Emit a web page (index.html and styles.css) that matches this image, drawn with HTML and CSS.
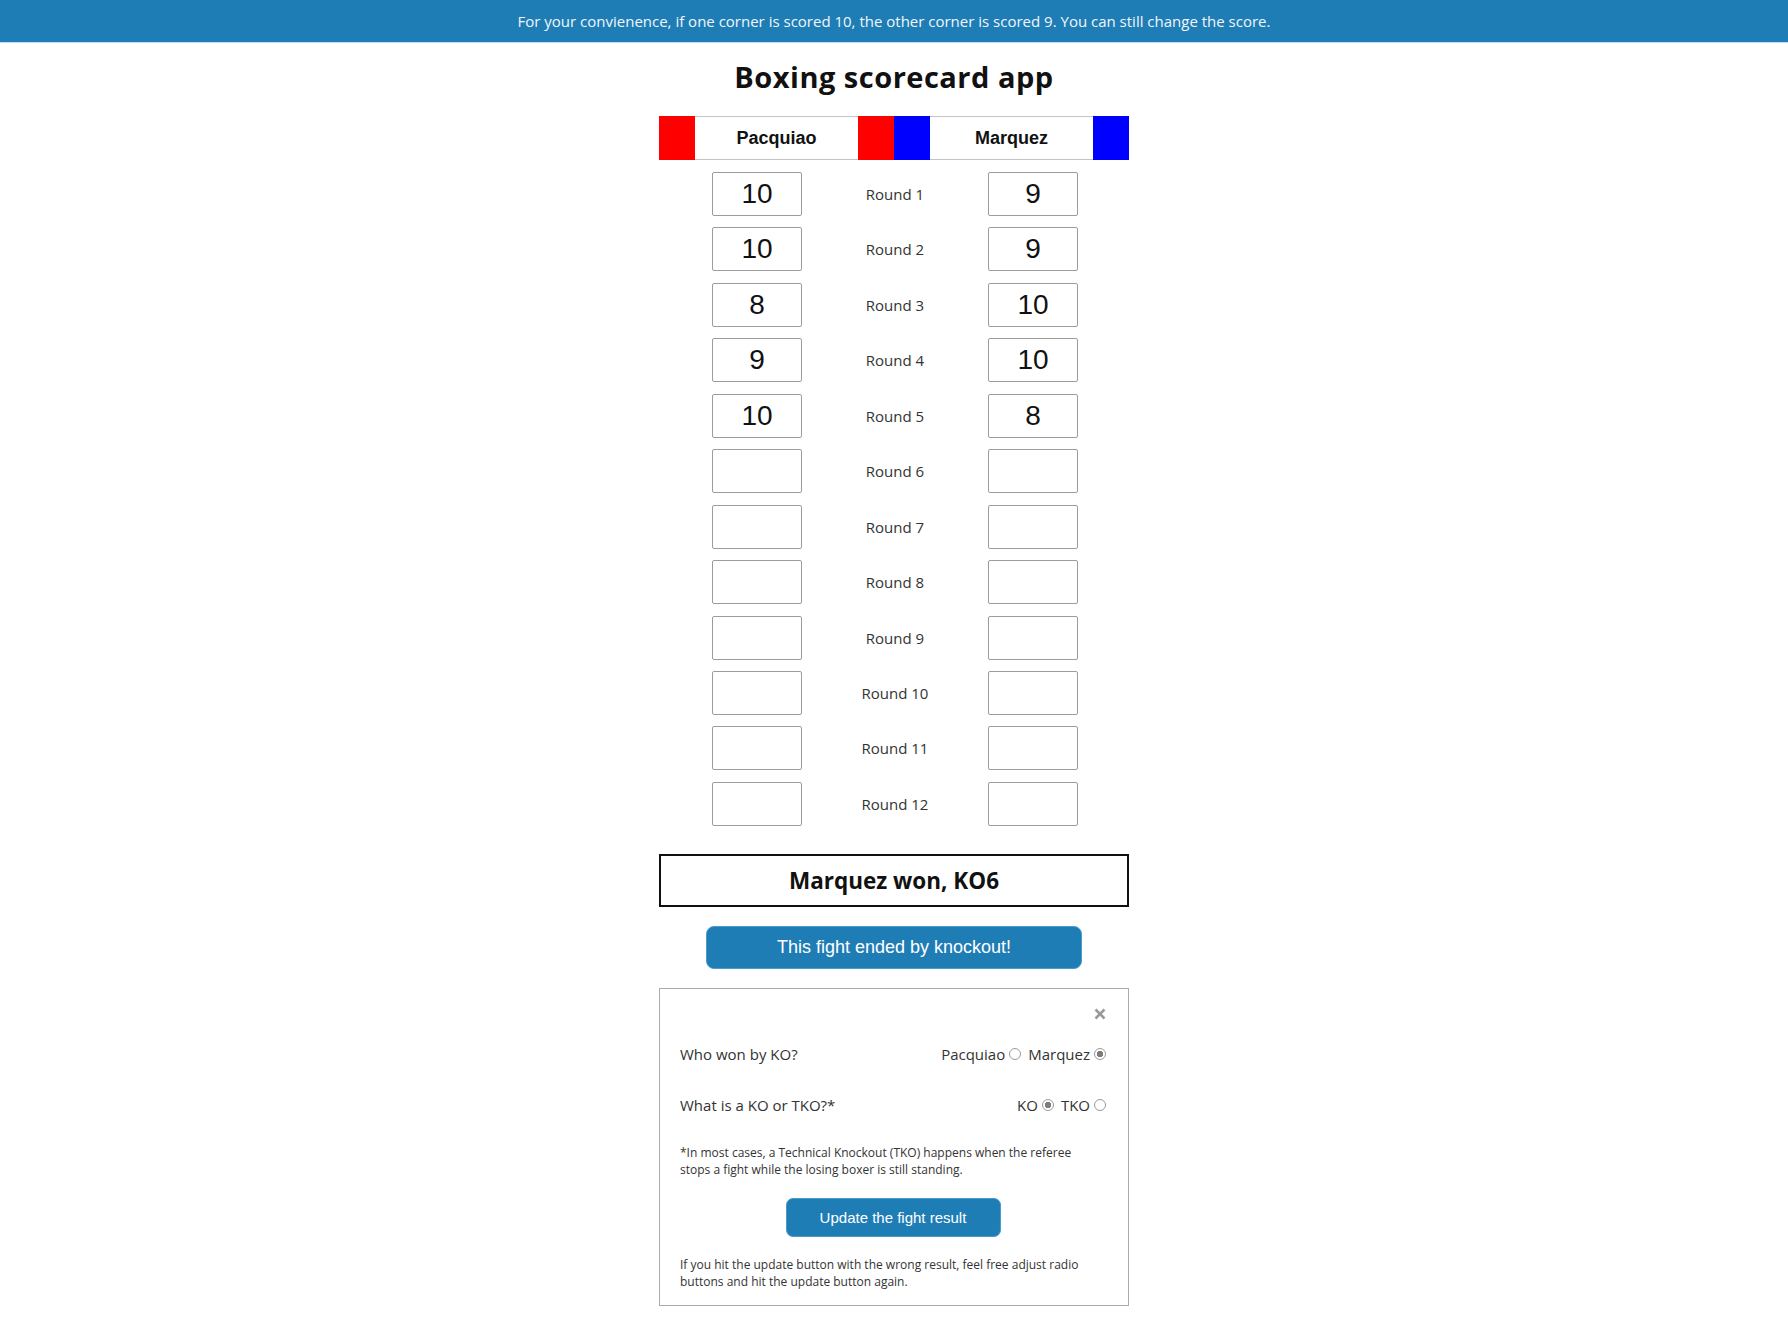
FILE: index.html
```html
<!DOCTYPE html>
<html lang="en">
<head>
<meta charset="utf-8">
<title>Boxing scorecard app</title>
<link rel="stylesheet" href="styles.css">
</head>
<body>
<div class="banner">For your convienence, if one corner is scored 10, the other corner is scored 9. You can still change the score.</div>
<main class="app">
  <h1 class="title">Boxing scorecard app</h1>
  <div class="fighters">
    <span class="corner red"></span>
    <span class="name">Pacquiao</span>
    <span class="corner red"></span>
    <span class="corner blue"></span>
    <span class="name">Marquez</span>
    <span class="corner blue"></span>
  </div>
  <div class="rounds">
    <div class="round"><input class="score" value="10"><span class="round-label">Round 1</span><input class="score" value="9"></div>
    <div class="round"><input class="score" value="10"><span class="round-label">Round 2</span><input class="score" value="9"></div>
    <div class="round"><input class="score" value="8"><span class="round-label">Round 3</span><input class="score" value="10"></div>
    <div class="round"><input class="score" value="9"><span class="round-label">Round 4</span><input class="score" value="10"></div>
    <div class="round"><input class="score" value="10"><span class="round-label">Round 5</span><input class="score" value="8"></div>
    <div class="round"><input class="score" value=""><span class="round-label">Round 6</span><input class="score" value=""></div>
    <div class="round"><input class="score" value=""><span class="round-label">Round 7</span><input class="score" value=""></div>
    <div class="round"><input class="score" value=""><span class="round-label">Round 8</span><input class="score" value=""></div>
    <div class="round"><input class="score" value=""><span class="round-label">Round 9</span><input class="score" value=""></div>
    <div class="round"><input class="score" value=""><span class="round-label">Round 10</span><input class="score" value=""></div>
    <div class="round"><input class="score" value=""><span class="round-label">Round 11</span><input class="score" value=""></div>
    <div class="round"><input class="score" value=""><span class="round-label">Round 12</span><input class="score" value=""></div>
  </div>
  <div class="result">Marquez won, KO6</div>
  <button class="btn btn-ko" type="button">This fight ended by knockout!</button>
  <section class="ko-panel">
    <div class="close-row">
      <svg class="close" width="12" height="12" viewBox="0 0 12 12" aria-label="close"><path d="M1.5 1.5 L10.5 10.5 M10.5 1.5 L1.5 10.5" stroke="#9a9a9a" stroke-width="2.6" stroke-linecap="butt"/></svg>
    </div>
    <div class="question">
      <span class="q-text">Who won by KO?</span>
      <span class="options">
        <label class="opt">Pacquiao <input type="radio" name="winner" class="radio"></label>
        <label class="opt">Marquez <input type="radio" name="winner" class="radio" checked></label>
      </span>
    </div>
    <div class="question q2">
      <span class="q-text">What is a KO or TKO?*</span>
      <span class="options">
        <label class="opt">KO <input type="radio" name="kind" class="radio" checked></label>
        <label class="opt">TKO <input type="radio" name="kind" class="radio"></label>
      </span>
    </div>
    <p class="note">*In most cases, a Technical Knockout (TKO) happens when the referee stops a fight while the losing boxer is still standing.</p>
    <button class="btn btn-update" type="button">Update the fight result</button>
    <p class="note note-last">If you hit the update button with the wrong result, feel free adjust radio buttons and hit the update button again.</p>
  </section>
</main>
</body>
</html>
```
FILE: styles.css
```css
* { box-sizing: border-box; }

body {
  margin: 0;
  background: #fff;
  font-family: "Open Sans", "Liberation Sans", sans-serif;
  color: #333;
}

.banner {
  height: 43px;
  background: #1f7db6;
  border-bottom: 1px solid #b9def5;
  color: #f2f6fa;
  font-size: 15px;
  display: flex;
  align-items: center;
  justify-content: center;
}

.app {
  width: 470px;
  margin: 0 auto;
  padding-bottom: 18px;
}

.title {
  margin: 16px 0 21px;
  font-size: 29px;
  letter-spacing: 0.5px;
  line-height: 36px;
  font-weight: 700;
  color: #111;
  text-align: center;
}

.fighters {
  display: flex;
  height: 44px;
}

.corner {
  width: 36px;
  flex: none;
}
.corner.red { background: #ff0000; }
.corner.blue { background: #0000ff; }

.name {
  flex: 1;
  display: flex;
  align-items: center;
  justify-content: center;
  border-top: 1px solid #c4c4c4;
  border-bottom: 1px solid #c4c4c4;
  font-family: "Liberation Sans", Arial, sans-serif;
  font-weight: 700;
  font-size: 18px;
  color: #111;
}

.rounds {
  margin-top: 12px;
  display: grid;
  row-gap: 11.45px;
}

.round {
  display: grid;
  grid-template-columns: 90px 1fr 90px;
  align-items: center;
  padding: 0 51px 0 53px;
  height: 44px;
}

.score {
  width: 90px;
  height: 44px;
  border: 1px solid #9c9c9c;
  border-radius: 2px;
  background: #fff;
  font-family: "Liberation Sans", Arial, sans-serif;
  font-size: 28px;
  color: #111;
  text-align: center;
  padding: 0;
  outline: none;
}

.round-label {
  text-align: center;
  font-size: 15px;
  color: #333;
}

.result {
  margin-top: 28px;
  height: 53px;
  border: 2px solid #111;
  display: flex;
  align-items: center;
  justify-content: center;
  font-size: 22.5px;
  font-weight: 700;
  color: #111;
}

.btn {
  display: block;
  margin: 0 auto;
  background: #1f7db6;
  border: 1px solid #4b9bcc;
  color: #fff;
  font-family: "Liberation Sans", Arial, sans-serif;
  cursor: pointer;
}

.btn-ko {
  margin-top: 19px;
  width: 376px;
  height: 43px;
  border-radius: 8px;
  font-size: 18px;
}

.ko-panel {
  margin-top: 19px;
  border: 1px solid #ababab;
  padding: 14px 22px 15px 20px;
}

.close-row {
  height: 22px;
  display: flex;
  justify-content: flex-end;
  align-items: center;
}

.question {
  margin-top: 17px;
  height: 24px;
  display: flex;
  align-items: center;
  justify-content: space-between;
  font-size: 15px;
  color: #333;
}

.question.q2 { margin-top: 27px; }

.options {
  display: flex;
  align-items: center;
  gap: 7px;
}

.opt {
  display: flex;
  align-items: center;
  gap: 4px;
}

.radio {
  appearance: none;
  -webkit-appearance: none;
  margin: 0;
  width: 12px;
  height: 12px;
  border: 1px solid #9a9a9a;
  border-radius: 50%;
  background: #fff;
}

.radio:checked {
  background: radial-gradient(circle, #7d7d7d 0 3px, #fff 3.5px);
}

.note {
  margin: 27px 0 0;
  font-size: 12px;
  line-height: 17px;
  color: #333;
  max-width: 420px;
}

.btn-update {
  margin-top: 20px;
  width: 215px;
  height: 39px;
  border-radius: 7px;
  font-size: 15px;
}

.note-last {
  margin-top: 19px;
}
```
